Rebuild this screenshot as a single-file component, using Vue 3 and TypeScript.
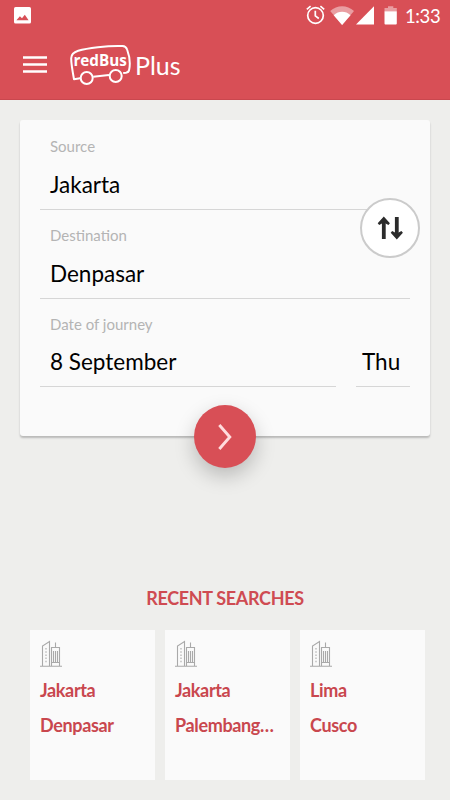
<script setup lang="ts">
interface Trip {
  from: string
  to: string
}

const trips: Trip[] = [
  { from: 'Jakarta', to: 'Denpasar' },
  { from: 'Jakarta', to: 'Palembang…' },
  { from: 'Lima', to: 'Cusco' },
]
</script>

<template>
  <div class="screen">
    <header class="top">
      <div class="status">
        <svg class="photo" width="17" height="17" viewBox="0 0 17 17">
          <rect width="17" height="16.5" rx="1.6" fill="#fff" />
          <path d="M2.4 13.3 5.9 9.2 8 11.3 10.8 7.8 14.6 13.3Z" fill="#d84f56" />
        </svg>
        <svg class="tray" width="92" height="20" viewBox="0 0 92 20">
          <g fill="none" stroke="#fff" stroke-width="1.7">
            <circle cx="9.5" cy="10.5" r="7.8" />
            <path d="M9.3 5.8v5.1l3.5 2.6" />
            <path d="M.8 4.3 4.6 1.2M18.2 4.3 14.4 1.2" />
          </g>
          <path d="M24.2 6C31-.4 41.2-.4 48 6L36.1 20Z" fill="#fff" opacity=".45" />
          <path d="M27.7 10.2C32.5 5.7 39.7 5.7 44.5 10.2L36.1 20Z" fill="#fff" />
          <path d="M68 1.2V19.5H50Z" fill="#fff" />
          <path d="M78.5 6.2V3H82V1.2H87.3V3H90.8V6.2Z" fill="#fff" opacity=".45" />
          <path d="M78.5 6.2H90.8V18.6a.9.9 0 0 1-.9.9H79.4a.9.9 0 0 1-.9-.9Z" fill="#fff" />
        </svg>
        <span class="clock">1:33</span>
      </div>
      <div class="bar">
        <svg class="menu" width="24" height="17" viewBox="0 0 24 17">
          <path d="M0 1.5H24M0 8.5H24M0 15.5H24" stroke="#fff" stroke-width="2.3" />
        </svg>
        <svg class="logo" width="62" height="42" viewBox="0 0 62 42">
          <g fill="none" stroke="#fff" stroke-width="2" stroke-linejoin="round">
            <path d="M10.2 34.3 4 35.2C3.3 31.5 1.1 20 1.2 14.2Q1.3 9 8.2 6.8C17 4 37 1.5 52.5 2Q56 2.2 57.1 5.5C59.5 12 60.4 20 59.1 26Q58.7 28.3 56 28.7L53.2 29" />
            <path d="M23.2 32.7 39 31" />
            <circle cx="16.7" cy="34" r="6" />
            <circle cx="45.7" cy="32" r="6" />
          </g>
          <text x="3.4" y="22.4" class="brand" textLength="53.5" lengthAdjust="spacingAndGlyphs">redBus</text>
        </svg>
        <h1 class="plus">Plus</h1>
      </div>
    </header>

    <section class="card">
      <div class="field">
        <label>Source</label>
        <div class="value">Jakarta</div>
      </div>
      <div class="field">
        <label>Destination</label>
        <div class="value">Denpasar</div>
      </div>
      <div class="dates">
        <div class="field day">
          <label>Date of journey</label>
          <div class="value">8 September</div>
        </div>
        <div class="field weekday">
          <div class="value">Thu</div>
        </div>
      </div>
      <button class="swap" aria-label="Swap">
        <svg width="26" height="24" viewBox="0 0 26 24">
          <g fill="none" stroke="#2b2b2b" stroke-width="3.8">
            <path d="M6.8 23V3" />
            <path d="M19.8 1V21" />
          </g>
          <path d="M6.8 .5 12.9 7.2 11.4 9 6.8 6.5 2.2 9 .7 7.2Z" fill="#2b2b2b" />
          <path d="M19.8 23.5 25.9 16.8 24.4 15 19.8 17.5 15.2 15 13.7 16.8Z" fill="#2b2b2b" />
        </svg>
      </button>
      <button class="go" aria-label="Search">
        <svg width="16" height="28" viewBox="0 0 16 28">
          <path d="M2.3 2 12.8 14 2.3 26" fill="none" stroke="#ffdcdd" stroke-width="2.9" />
        </svg>
      </button>
    </section>

    <h2 class="heading">RECENT SEARCHES</h2>
    <section class="recent">
      <article v-for="(trip, i) in trips" :key="i" class="trip">
        <svg class="city" width="22" height="27" viewBox="0 0 22 27">
          <g fill="none" stroke="#a9a9a9" stroke-width="1.1">
            <path d="M0 26.3H22M2.5 26V6L9.5 1.5V26M11.5 26V7.5H19.5V26M11.5 22.5H19.5M15.5 7V2.5" />
            <path d="M13.5 11V22M15.5 11V22M17.5 11V22" />
            <path d="M6 8V24" stroke-dasharray="1.5 1.7" />
          </g>
        </svg>
        <div class="place">{{ trip.from }}</div>
        <div class="place">{{ trip.to }}</div>
      </article>
    </section>
  </div>
</template>

<style>
body {
  background: #eeeeec;
}
</style>

<style scoped>
.screen {
  width: 450px;
  height: 800px;
  overflow: hidden;
  background: #eeeeec;
  font-family: Lato, sans-serif;
  color: #000;
}
.top {
  box-sizing: border-box;
  height: 100px;
  background: #d84f56;
  border-bottom: 1px solid #c9474e;
  color: #fff;
}
.status {
  display: flex;
  height: 32px;
  padding: 0 10px 0 14px;
}
.status svg {
  flex: none;
}
.photo {
  margin-top: 7px;
}
.tray {
  margin: 5px 0 0 275px;
}
.clock {
  margin-left: 7px;
  font-size: 18.5px;
  letter-spacing: -0.4px;
  line-height: 32px;
}
.bar {
  display: flex;
  height: 67px;
  padding-left: 23px;
}
.menu {
  margin-top: 24px;
}
.logo {
  margin: 12px 0 0 23px;
}
.brand {
  font: bold 16.5px "Open Sans", sans-serif;
  fill: #fff;
}
.plus {
  margin: 16px 0 0 3px;
  font-size: 25px;
  font-weight: 400;
  line-height: 34px;
}
.card {
  position: relative;
  box-sizing: border-box;
  height: 316px;
  margin: 20px 20px 0;
  padding: 1px 20px 0;
  border-radius: 3px;
  background: #fafafa;
  box-shadow: 0 2px 2px rgba(0, 0, 0, 0.22);
}
.field {
  box-sizing: border-box;
  height: 89px;
  padding: 15px 10px 0;
  border-bottom: 1px solid #d6d6d6;
}
label {
  display: block;
  height: 20px;
  font-size: 15px;
  line-height: 20px;
  color: #b4b4b4;
}
.value {
  margin-top: 13px;
  font-size: 22.5px;
  line-height: 32px;
}
.dates {
  display: flex;
  gap: 20px;
}
.dates .field {
  height: 88px;
}
.dates .value {
  margin-top: 12px;
}
.day {
  flex: 1;
}
.weekday {
  width: 54px;
  padding: 35px 0 0 6px;
}
button {
  display: flex;
  align-items: center;
  justify-content: center;
  box-sizing: border-box;
  padding: 0;
  border-radius: 50%;
}
.swap {
  position: absolute;
  top: 78px;
  right: 10px;
  width: 60px;
  height: 60px;
  border: 2px solid #cbcbcb;
  background: #fff;
}
.go {
  position: absolute;
  left: 174px;
  top: 285px;
  width: 62px;
  height: 63px;
  border: 0;
  background: #d84f56;
  box-shadow: 0 8px 20px rgba(0, 0, 0, 0.22);
}
.heading {
  margin: 150px 0 0;
  font-size: 18px;
  font-weight: 700;
  letter-spacing: -0.33px;
  line-height: 24px;
  text-align: center;
  color: #cf4b52;
}
.recent {
  display: grid;
  grid-template-columns: repeat(3, 125px);
  gap: 10px;
  padding: 20px 0 0 30px;
}
.trip {
  box-sizing: border-box;
  height: 150px;
  padding: 10px 10px 0;
  background: #fafafa;
}
.city {
  display: block;
}
.place {
  margin-top: 11px;
  font-size: 18px;
  font-weight: 700;
  letter-spacing: -0.35px;
  line-height: 24px;
  white-space: nowrap;
  color: #c9474e;
}
</style>
